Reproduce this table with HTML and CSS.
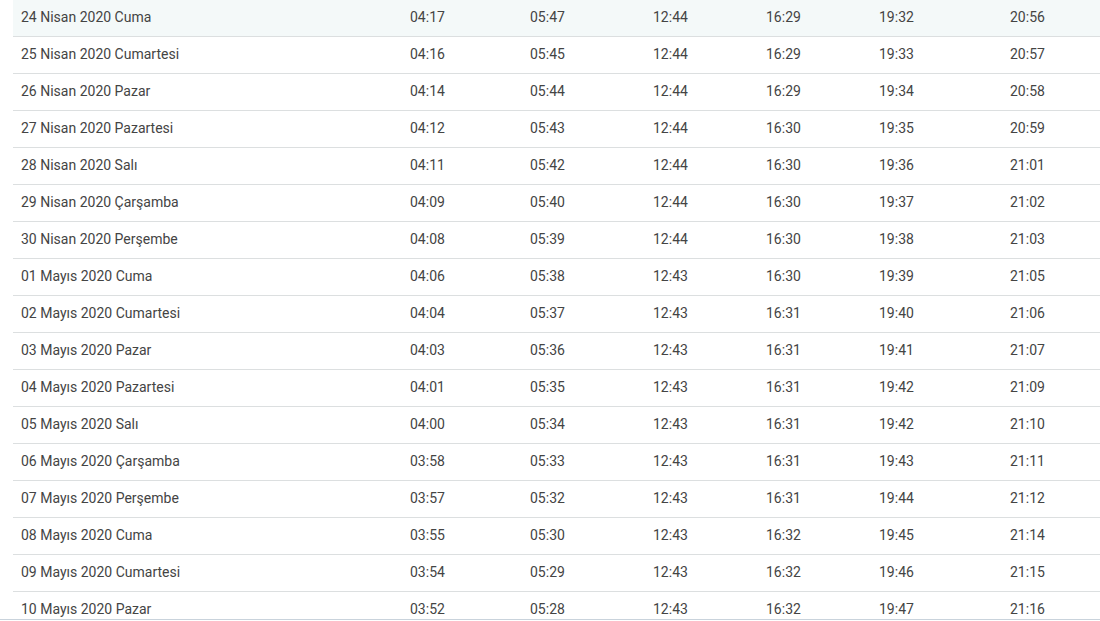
FILE: index.html
```html
<!DOCTYPE html>
<html lang="tr">
<head>
<meta charset="utf-8">
<link rel="stylesheet" href="styles.css">
</head>
<body>
<div class="page">
<table class="times">
<colgroup>
<col class="c-date"><col class="c-a"><col class="c-b"><col class="c-c"><col class="c-d"><col class="c-e"><col class="c-f">
</colgroup>
<tbody>
<tr class="today"><td>24 Nisan 2020 Cuma</td><td>04:17</td><td>05:47</td><td>12:44</td><td>16:29</td><td>19:32</td><td>20:56</td></tr>
<tr><td>25 Nisan 2020 Cumartesi</td><td>04:16</td><td>05:45</td><td>12:44</td><td>16:29</td><td>19:33</td><td>20:57</td></tr>
<tr><td>26 Nisan 2020 Pazar</td><td>04:14</td><td>05:44</td><td>12:44</td><td>16:29</td><td>19:34</td><td>20:58</td></tr>
<tr><td>27 Nisan 2020 Pazartesi</td><td>04:12</td><td>05:43</td><td>12:44</td><td>16:30</td><td>19:35</td><td>20:59</td></tr>
<tr><td>28 Nisan 2020 Salı</td><td>04:11</td><td>05:42</td><td>12:44</td><td>16:30</td><td>19:36</td><td>21:01</td></tr>
<tr><td>29 Nisan 2020 Çarşamba</td><td>04:09</td><td>05:40</td><td>12:44</td><td>16:30</td><td>19:37</td><td>21:02</td></tr>
<tr><td>30 Nisan 2020 Perşembe</td><td>04:08</td><td>05:39</td><td>12:44</td><td>16:30</td><td>19:38</td><td>21:03</td></tr>
<tr><td>01 Mayıs 2020 Cuma</td><td>04:06</td><td>05:38</td><td>12:43</td><td>16:30</td><td>19:39</td><td>21:05</td></tr>
<tr><td>02 Mayıs 2020 Cumartesi</td><td>04:04</td><td>05:37</td><td>12:43</td><td>16:31</td><td>19:40</td><td>21:06</td></tr>
<tr><td>03 Mayıs 2020 Pazar</td><td>04:03</td><td>05:36</td><td>12:43</td><td>16:31</td><td>19:41</td><td>21:07</td></tr>
<tr><td>04 Mayıs 2020 Pazartesi</td><td>04:01</td><td>05:35</td><td>12:43</td><td>16:31</td><td>19:42</td><td>21:09</td></tr>
<tr><td>05 Mayıs 2020 Salı</td><td>04:00</td><td>05:34</td><td>12:43</td><td>16:31</td><td>19:42</td><td>21:10</td></tr>
<tr><td>06 Mayıs 2020 Çarşamba</td><td>03:58</td><td>05:33</td><td>12:43</td><td>16:31</td><td>19:43</td><td>21:11</td></tr>
<tr><td>07 Mayıs 2020 Perşembe</td><td>03:57</td><td>05:32</td><td>12:43</td><td>16:31</td><td>19:44</td><td>21:12</td></tr>
<tr><td>08 Mayıs 2020 Cuma</td><td>03:55</td><td>05:30</td><td>12:43</td><td>16:32</td><td>19:45</td><td>21:14</td></tr>
<tr><td>09 Mayıs 2020 Cumartesi</td><td>03:54</td><td>05:29</td><td>12:43</td><td>16:32</td><td>19:46</td><td>21:15</td></tr>
<tr><td>10 Mayıs 2020 Pazar</td><td>03:52</td><td>05:28</td><td>12:43</td><td>16:32</td><td>19:47</td><td>21:16</td></tr>
</tbody>
</table>
</div>
<div class="frame-edge"></div>
</body>
</html>
```
FILE: styles.css
```css
html, body {
  margin: 0;
  padding: 0;
  background: #fff;
  overflow: hidden;
}
body {
  width: 1100px;
  height: 621px;
  position: relative;
  font-family: Roboto, "Liberation Sans", sans-serif;
  font-size: 14px;
  color: #444;
}
.page {
  padding-left: 13px;
  margin-top: -1px;
}
.times {
  border-collapse: collapse;
  table-layout: fixed;
  width: 1087px;
}
.c-date { width: 389px; }
.c-a { width: 120px; }
.c-b { width: 123px; }
.c-c { width: 113px; }
.c-d { width: 113px; }
.c-e { width: 131px; }
.c-f { width: 98px; }
.times td {
  height: 37px;
  padding: 0 8px 2px;
  box-sizing: border-box;
  border-bottom: 1px solid #dcdfe0;
  white-space: nowrap;
  vertical-align: middle;
}
.times tr.today td {
  background: #f4f9f9;
  padding-bottom: 0;
}
.frame-edge {
  position: absolute;
  left: 0;
  right: 0;
  bottom: 1px;
  height: 1px;
  background: #c9d3dc;
}
```
